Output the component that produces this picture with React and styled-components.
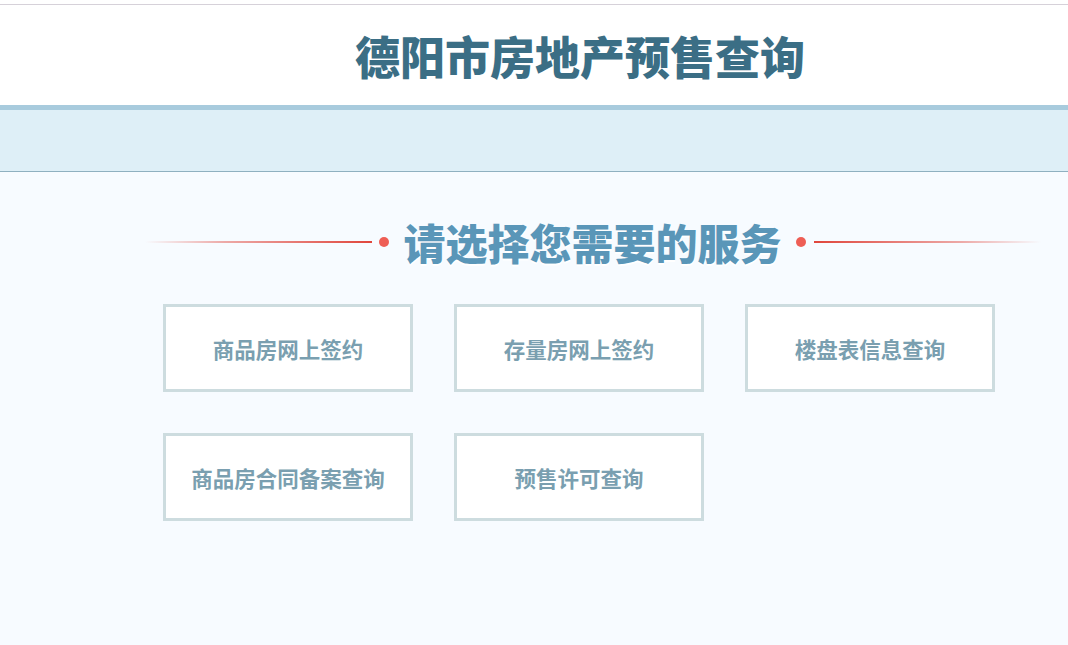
import React from "react";
import styled, { createGlobalStyle } from "styled-components";

const Global = createGlobalStyle`
  html, body { margin: 0; padding: 0; background: #f7fbff; }
  body { font-family: "Noto Sans CJK SC", "Noto Sans", sans-serif; }
`;

const Page = styled.div`
  min-height: 645px;
  display: flex;
  flex-direction: column;
`;

const TopRule = styled.div`
  height: 4px;
  background: #ffffff;
  border-bottom: 1px solid #d6d1d9;
`;

const Header = styled.header`
  height: 100px;
  background: #ffffff;
  display: flex;
  align-items: center;
  justify-content: center;
  padding-left: 92px;
`;

const Title = styled.h1`
  margin: 0;
  font-size: 45px;
  font-weight: 900;
  line-height: 1;
  color: #3b6e85;
`;

const Band = styled.div`
  height: 61px;
  background: #deeff7;
  border-top: 5px solid #a8cbdd;
  border-bottom: 1px solid #8fb0c0;
`;

const Main = styled.main`
  flex: 1;
  background: #f7fbff;
  display: flex;
  flex-direction: column;
  align-items: center;
`;

const HeadingRow = styled.div`
  margin-top: 44px;
  display: flex;
  align-items: center;
  padding-left: 118px;
`;

const Line = styled.span`
  width: 227px;
  height: 2px;
  background: linear-gradient(
    ${(p) => (p.$side === "left" ? "to right" : "to left")},
    rgba(224, 70, 60, 0) 0%,
    rgba(224, 70, 60, 0.45) 35%,
    #e0463c 100%
  );
`;

const Dot = styled.span`
  width: 10px;
  height: 10px;
  border-radius: 50%;
  background: #ee5e55;
  margin: ${(p) => (p.$side === "left" ? "0 14px 0 7px" : "0 8px 0 14px")};
`;

const Heading = styled.h2`
  margin: 0;
  font-size: 42px;
  font-weight: 900;
  line-height: 52px;
  color: #5a96b8;
  text-shadow: 0 2px 0 #ffffff;
`;

const Grid = styled.div`
  margin-top: 36px;
  padding-left: 90px;
  display: grid;
  grid-template-columns: repeat(3, 250px);
  column-gap: 41px;
  row-gap: 41px;
`;

const Card = styled.a`
  box-sizing: border-box;
  height: 88px;
  background: #ffffff;
  border: 3px solid #cddcdf;
  display: flex;
  align-items: center;
  justify-content: center;
  font-size: 21.5px;
  font-weight: 700;
  color: #7a9fb0;
  text-decoration: none;
  cursor: pointer;
`;

const services = [
  "商品房网上签约",
  "存量房网上签约",
  "楼盘表信息查询",
  "商品房合同备案查询",
  "预售许可查询",
];

export default function App() {
  return (
    <>
      <Global />
      <Page>
        <TopRule />
        <Header>
          <Title>德阳市房地产预售查询</Title>
        </Header>
        <Band />
        <Main>
          <HeadingRow>
            <Line $side="left" />
            <Dot $side="left" />
            <Heading>请选择您需要的服务</Heading>
            <Dot $side="right" />
            <Line $side="right" />
          </HeadingRow>
          <Grid>
            {services.map((s) => (
              <Card key={s}>{s}</Card>
            ))}
          </Grid>
        </Main>
      </Page>
    </>
  );
}
